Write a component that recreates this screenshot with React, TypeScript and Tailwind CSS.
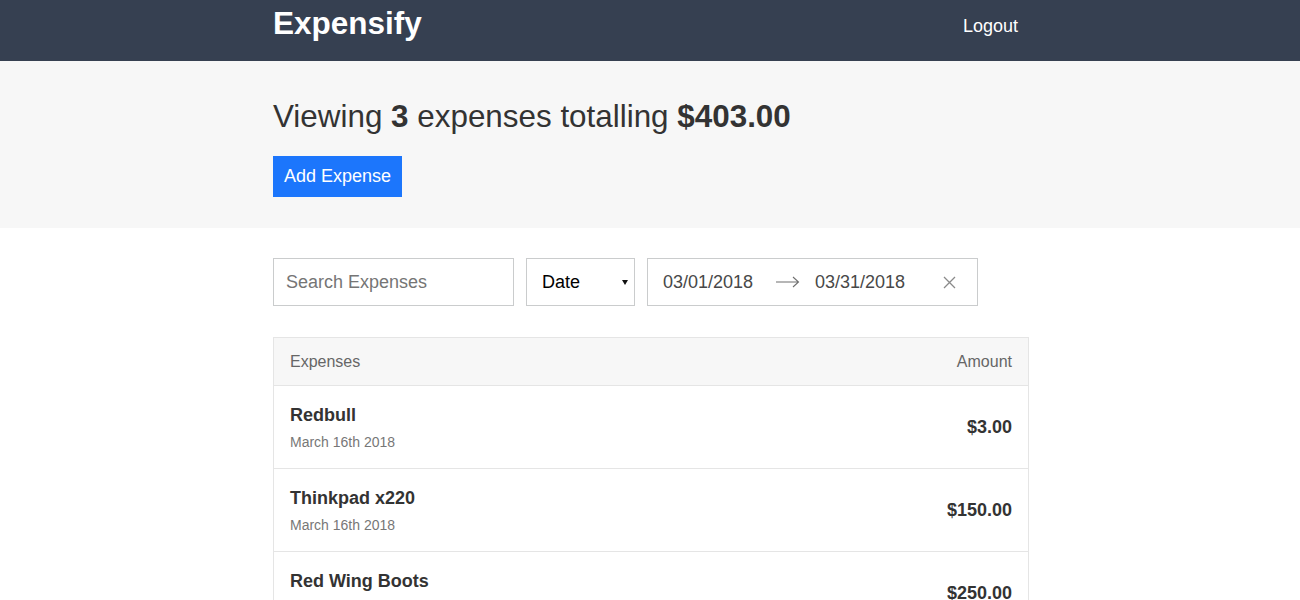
import { useState } from 'react';

type Expense = {
  id: string;
  description: string;
  createdAt: string;
  amount: string;
};

const expenses: Expense[] = [
  { id: '1', description: 'Redbull', createdAt: 'March 16th 2018', amount: '$3.00' },
  { id: '2', description: 'Thinkpad x220', createdAt: 'March 16th 2018', amount: '$150.00' },
  { id: '3', description: 'Red Wing Boots', createdAt: 'March 16th 2018', amount: '$250.00' },
];

function Container({ children, className = '' }: { children: React.ReactNode; className?: string }) {
  return (
    <div className={`mx-auto w-[758px] pl-[2px] ${className}`}>
      <div className="w-[756px]">{children}</div>
    </div>
  );
}

function Header() {
  return (
    <header className="h-[61px] bg-[#364051]">
      <Container>
        <div className="flex items-start justify-between">
          <h1 className="pt-[3px] text-[31.5px] font-bold leading-[40px] text-white">Expensify</h1>
          <button className="mr-[11px] mt-[15px] text-[18px] leading-[22px] text-white">Logout</button>
        </div>
      </Container>
    </header>
  );
}

function Summary() {
  return (
    <div className="bg-[#f7f7f7] pb-[31px] pt-[36px]">
      <Container>
        <h2 className="text-[31.4px] font-light leading-[40px] text-[#333]">
          Viewing <span className="font-bold">3</span> expenses totalling{' '}
          <span className="font-bold">$403.00</span>
        </h2>
        <button className="mt-[19px] h-[41px] w-[129px] bg-[#1c76fc] text-[18px] text-white">
          Add Expense
        </button>
      </Container>
    </div>
  );
}

function Filters() {
  const [text, setText] = useState('');
  return (
    <div className="mb-[31px] flex gap-[12px]">
      <input
        value={text}
        onChange={(e) => setText(e.target.value)}
        placeholder="Search Expenses"
        className="h-[48px] w-[241px] border border-[#cacccd] px-[12px] text-[18px] text-[#333] outline-none placeholder:text-[#757575]"
      />
      <div className="relative h-[48px] w-[109px]">
        <select className="h-full w-full appearance-none border border-[#cacccd] bg-white pl-[15px] text-[18px] text-black outline-none">
          <option>Date</option>
          <option>Amount</option>
        </select>
        <svg
          className="pointer-events-none absolute right-[7px] top-[22px]"
          width="6"
          height="5"
          viewBox="0 0 6 5"
        >
          <path d="M0 0h6L3 5z" fill="#111" />
        </svg>
      </div>
      <div className="flex h-[48px] w-[331px] items-center border border-[#cacccd] bg-white pl-[15px] text-[18px] text-[#484848]">
        <span className="w-[113px]">03/01/2018</span>
        <svg width="24" height="12" viewBox="0 0 24 12" className="mr-[15px]">
          <path d="M0 6h22.5M17 1l5.5 5-5.5 5" fill="none" stroke="#6f6f6f" strokeWidth="1.1" />
        </svg>
        <span className="w-[128px]">03/31/2018</span>
        <svg width="13" height="13" viewBox="0 0 13 13">
          <path d="M1 1l11 11M12 1L1 12" stroke="#8a8a8a" strokeWidth="1.3" />
        </svg>
      </div>
    </div>
  );
}

function ExpenseList() {
  return (
    <div className="border-x border-t border-[#e5e5e5]">
      <div className="flex h-[48px] items-center justify-between border-b border-[#e5e5e5] bg-[#f7f7f7] px-[16px] text-[16px] text-[#666]">
        <span>Expenses</span>
        <span>Amount</span>
      </div>
      {expenses.map((e) => (
        <div
          key={e.id}
          className="flex items-center justify-between border-b border-[#e5e5e5] px-[16px] pb-[17px] pt-[18px]"
        >
          <div>
            <h3 className="text-[18px] font-bold leading-[22px] text-[#333]">{e.description}</h3>
            <p className="mt-[7px] text-[14px] leading-[18px] text-[#777]">{e.createdAt}</p>
          </div>
          <h3 className="text-[18px] font-bold text-[#333]">{e.amount}</h3>
        </div>
      ))}
    </div>
  );
}

export default function App() {
  return (
    <div className="min-h-screen bg-white font-['Liberation_Sans',Arial,sans-serif]">
      <Header />
      <Summary />
      <Container className="pt-[30px]">
        <Filters />
        <ExpenseList />
      </Container>
    </div>
  );
}
